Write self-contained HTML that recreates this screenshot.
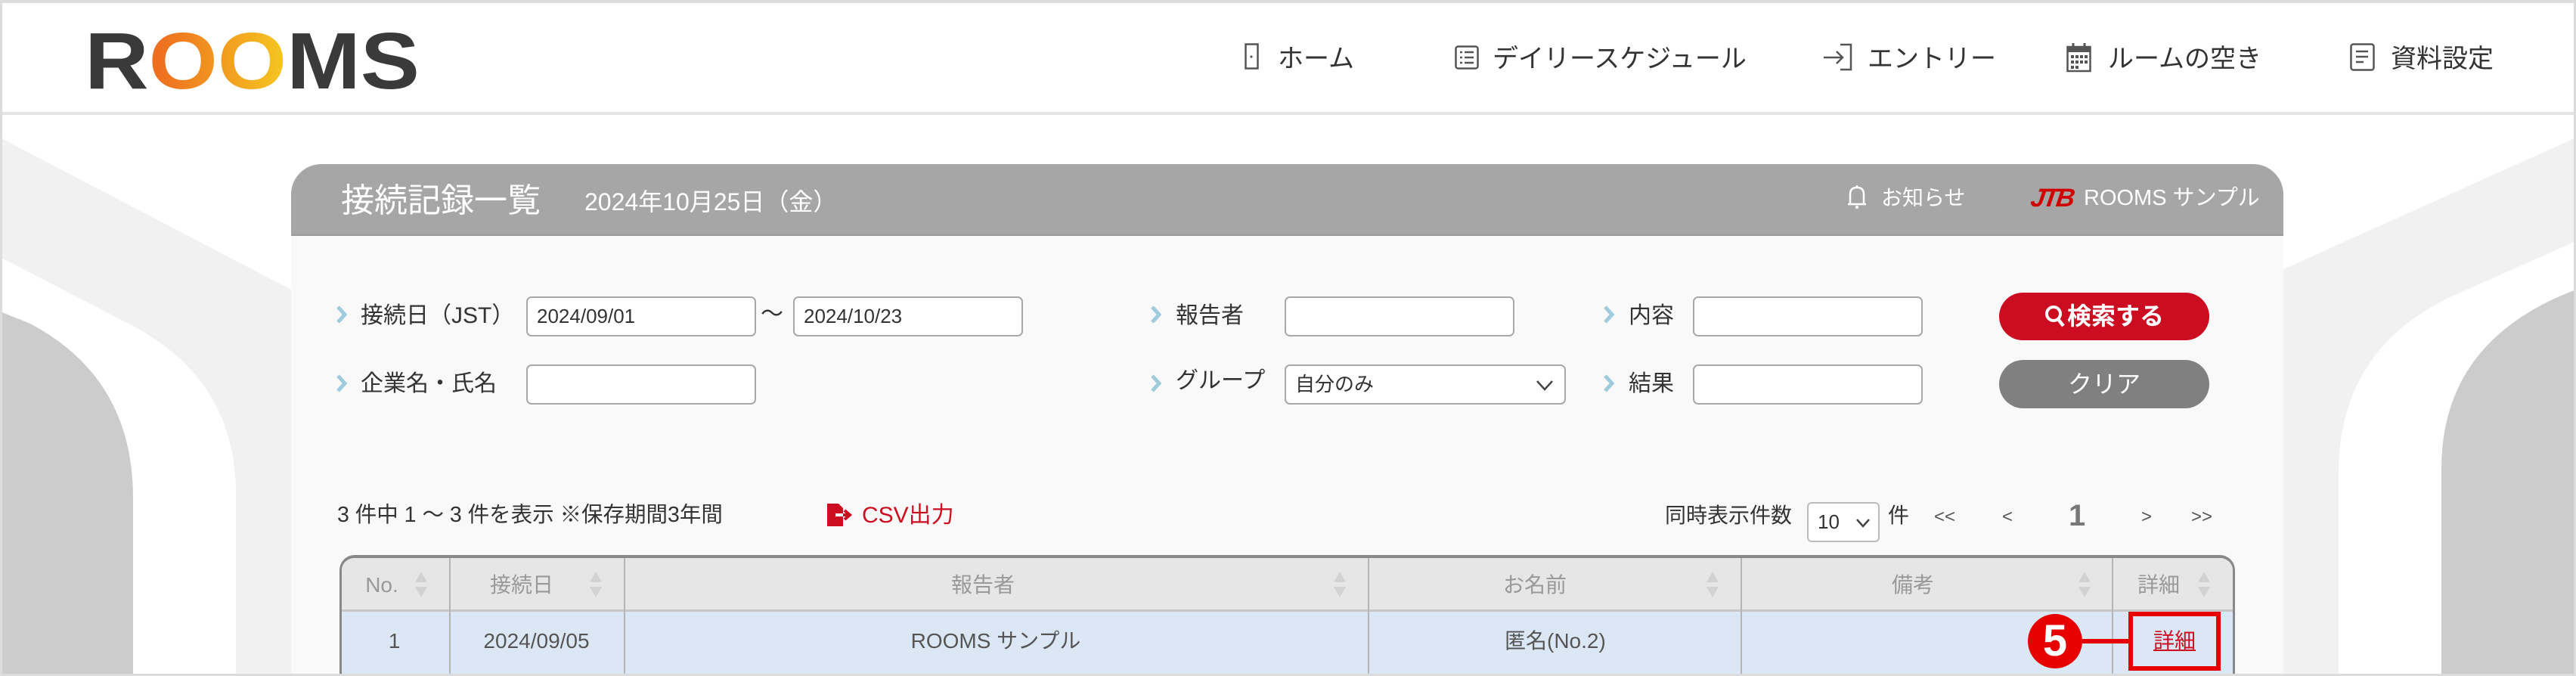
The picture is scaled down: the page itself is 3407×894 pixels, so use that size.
<!DOCTYPE html>
<html><head><meta charset="utf-8">
<style>
*{margin:0;padding:0;box-sizing:border-box}
html,body{width:3407px;height:894px;overflow:hidden;background:#fff}
body{position:relative;font-family:"Liberation Sans","Noto Sans CJK JP",sans-serif;color:#333}
.a{position:absolute;white-space:nowrap}
.nav{font-size:34px;color:#333;top:56px;line-height:44px}
.lbl{font-size:30px;line-height:40px;color:#333}
.inp{position:absolute;background:#fff;border:2px solid #a8a8a8;border-radius:7px;font-size:26px;line-height:49px;padding-left:12px;color:#333}
.th{position:absolute;top:738px;height:71px;line-height:71px;font-size:28px;color:#999;text-align:center}
.td{position:absolute;top:812px;height:82px;line-height:72px;font-size:28px;color:#555;text-align:center}
.vl{position:absolute;top:738px;width:2px;height:160px;background:#b5b5b5}
</style></head><body>
<svg class="a" style="left:0;top:0" width="3407" height="894">
<path d="M0,182 L385,383 L385,894 L0,894Z" fill="#f1f1f1"/>
<path d="M0,340 L170,428 Q312,500 312,654 L312,894 L0,894Z" fill="#fff"/>
<path d="M0,412 L40,428 Q176,500 176,659 L176,894 L0,894Z" fill="#cccccc"/>
<path d="M3020,356 L3407,182 L3407,894 L3020,894Z" fill="#f1f1f1"/>
<path d="M3407,319 L3247,390 Q3093,460 3093,626 L3093,894 L3407,894Z" fill="#fff"/>
<path d="M3407,383 Q3229,450 3229,620 L3229,894 L3407,894Z" fill="#cccccc"/>
</svg>
<div class="a" style="left:0;top:0;width:3407px;height:150px;background:#fff"></div>
<div class="a" style="left:0;top:148px;width:3407px;height:4px;background:#e4e4e4"></div>
<svg class="a" style="left:100px;top:30px" width="480" height="100">
<defs><linearGradient id="g" gradientUnits="userSpaceOnUse" x1="110" y1="0" x2="300" y2="0"><stop offset="0" stop-color="#ee6f1f"/><stop offset="1" stop-color="#f6d321"/></linearGradient></defs>
<text x="12" y="87" font-family="Liberation Sans" font-weight="bold" font-size="106" textLength="443" lengthAdjust="spacingAndGlyphs" fill="#3a3a3a">R<tspan fill="url(#g)">OO</tspan>MS</text>
</svg>
<svg class="a" style="left:1646px;top:57px" width="20" height="36"><rect x="1.5" y="1.5" width="16" height="32" fill="none" stroke="#555" stroke-width="2.5"/><circle cx="9" cy="18" r="1.6" fill="#555"/></svg>
<div class="a nav" style="left:1690px">ホーム</div>
<svg class="a" style="left:1924px;top:60px" width="32" height="32"><rect x="1.5" y="1.5" width="29" height="29" rx="3" fill="none" stroke="#555" stroke-width="2.5"/><g stroke="#555" stroke-width="2.5"><line x1="7" y1="9" x2="10" y2="9"/><line x1="13" y1="9" x2="25" y2="9"/><line x1="7" y1="16" x2="10" y2="16"/><line x1="13" y1="16" x2="25" y2="16"/><line x1="7" y1="23" x2="10" y2="23"/><line x1="13" y1="23" x2="25" y2="23"/></g></svg>
<div class="a nav" style="left:1974px">デイリースケジュール</div>
<svg class="a" style="left:2410px;top:57px" width="44" height="38"><path d="M24,2 H38 V35 H24" fill="none" stroke="#555" stroke-width="2.5"/><path d="M2,19 H27 M19,11 L27,19 L19,27" fill="none" stroke="#555" stroke-width="2.5"/></svg>
<div class="a nav" style="left:2470px">エントリー</div>
<svg class="a" style="left:2733px;top:56px" width="34" height="40"><rect x="1.5" y="6" width="30" height="32" fill="none" stroke="#555" stroke-width="2.5"/><rect x="1.5" y="6" width="30" height="7" fill="#555"/><line x1="9" y1="1" x2="9" y2="8" stroke="#555" stroke-width="3"/><line x1="24" y1="1" x2="24" y2="8" stroke="#555" stroke-width="3"/><g fill="#555"><rect x="6" y="17" width="4" height="4"/><rect x="12" y="17" width="4" height="4"/><rect x="18" y="17" width="4" height="4"/><rect x="24" y="17" width="4" height="4"/><rect x="6" y="24" width="4" height="4"/><rect x="12" y="24" width="4" height="4"/><rect x="18" y="24" width="4" height="4"/><rect x="24" y="24" width="4" height="4"/><rect x="6" y="31" width="4" height="4"/><rect x="12" y="31" width="4" height="4"/></g></svg>
<div class="a nav" style="left:2788px">ルームの空き</div>
<svg class="a" style="left:3108px;top:57px" width="34" height="38"><rect x="1.5" y="1.5" width="30" height="34" rx="3" fill="none" stroke="#555" stroke-width="2.5"/><g stroke="#555" stroke-width="2.5"><line x1="8" y1="11" x2="24" y2="11"/><line x1="8" y1="18" x2="24" y2="18"/><line x1="8" y1="25" x2="18" y2="25"/></g></svg>
<div class="a nav" style="left:3162px">資料設定</div>
<div class="a" style="left:385px;top:217px;width:2635px;height:700px;background:#f9f9f9;border-radius:40px 40px 0 0;overflow:hidden">
 <div style="height:95px;background:#a6a6a6;border-bottom:2px solid #999"></div>
</div>
<div class="a" style="left:451px;top:238px;font-size:44px;line-height:56px;color:#fff">接続記録一覧</div>
<div class="a" style="left:773px;top:246px;font-size:32px;line-height:42px;color:#fff">2024年10月25日（金）</div>
<svg class="a" style="left:2443px;top:244px" width="26" height="34"><path d="M4,26 V13 Q4,4 13,4 Q22,4 22,13 V26 Z M1,26 H25" fill="none" stroke="#fff" stroke-width="2.5"/><line x1="13" y1="1" x2="13" y2="4" stroke="#fff" stroke-width="2.5"/><circle cx="13" cy="30" r="2.2" fill="#fff"/></svg>
<div class="a" style="left:2488px;top:244px;font-size:28px;line-height:36px;color:#fff">お知らせ</div>
<div class="a" style="left:2686px;top:240px;font-size:34px;line-height:44px;color:#d00000;font-weight:bold;font-style:italic;letter-spacing:-3px;transform:skewX(-8deg)">JTB</div>
<div class="a" style="left:2756px;top:244px;font-size:29px;line-height:36px;color:#fff">ROOMS サンプル</div>
<svg class="a" style="left:444px;top:403px" width="16" height="26"><polyline points="3,3 12,13 3,23" fill="none" stroke="#9fcbdc" stroke-width="5"/></svg>
<div class="a lbl" style="left:477px;top:398px">接続日（JST）</div>
<div class="inp" style="left:696px;top:392px;width:304px;height:53px">2024/09/01</div>
<div class="a lbl" style="left:1006px;top:396px">～</div>
<div class="inp" style="left:1049px;top:392px;width:304px;height:53px">2024/10/23</div>
<svg class="a" style="left:1521px;top:403px" width="16" height="26"><polyline points="3,3 12,13 3,23" fill="none" stroke="#9fcbdc" stroke-width="5"/></svg>
<div class="a lbl" style="left:1555px;top:398px">報告者</div>
<div class="inp" style="left:1699px;top:392px;width:304px;height:53px"></div>
<svg class="a" style="left:2120px;top:403px" width="16" height="26"><polyline points="3,3 12,13 3,23" fill="none" stroke="#9fcbdc" stroke-width="5"/></svg>
<div class="a lbl" style="left:2154px;top:398px">内容</div>
<div class="inp" style="left:2239px;top:392px;width:304px;height:53px"></div>
<div class="a" style="left:2644px;top:387px;width:278px;height:63px;border-radius:32px;background:#cc0c20;color:#fff;font-size:32px;line-height:63px;text-align:center;font-weight:bold"><svg width="28" height="30" style="vertical-align:-4px;margin-right:2px"><circle cx="12" cy="12" r="9" fill="none" stroke="#fff" stroke-width="4"/><line x1="18" y1="19" x2="25" y2="28" stroke="#fff" stroke-width="4.5"/></svg>検索する</div>
<svg class="a" style="left:444px;top:494px" width="16" height="26"><polyline points="3,3 12,13 3,23" fill="none" stroke="#9fcbdc" stroke-width="5"/></svg>
<div class="a lbl" style="left:477px;top:488px">企業名・氏名</div>
<div class="inp" style="left:696px;top:482px;width:304px;height:53px"></div>
<svg class="a" style="left:1521px;top:494px" width="16" height="26"><polyline points="3,3 12,13 3,23" fill="none" stroke="#9fcbdc" stroke-width="5"/></svg>
<div class="a lbl" style="left:1555px;top:484px">グループ</div>
<div class="inp" style="left:1699px;top:482px;width:372px;height:53px">自分のみ<svg width="24" height="16" style="position:absolute;right:14px;top:18px"><polyline points="2,2 12,13 22,2" fill="none" stroke="#444" stroke-width="2.5"/></svg></div>
<svg class="a" style="left:2120px;top:494px" width="16" height="26"><polyline points="3,3 12,13 3,23" fill="none" stroke="#9fcbdc" stroke-width="5"/></svg>
<div class="a lbl" style="left:2154px;top:488px">結果</div>
<div class="inp" style="left:2239px;top:482px;width:304px;height:53px"></div>
<div class="a" style="left:2644px;top:476px;width:278px;height:64px;border-radius:32px;background:#808080;color:#fff;font-size:32px;line-height:64px;text-align:center">クリア</div>
<div class="a" style="left:446px;top:662px;font-size:28.5px;line-height:38px;color:#333">3 件中 1 ～ 3 件を表示 ※保存期間3年間</div>
<svg class="a" style="left:1093px;top:665px" width="40" height="32"><path d="M1,1 H16 L22,7 V31 H1 Z" fill="#cc0c20"/><path d="M12,16 H30 M24,10 L31,16 L24,22" fill="none" stroke="#cc0c20" stroke-width="4"/><path d="M12,16 H22" stroke="#fff" stroke-width="4"/></svg>
<div class="a" style="left:1140px;top:663px;font-size:30px;line-height:38px;color:#cc0c20">CSV出力</div>
<div class="a" style="left:2202px;top:664px;font-size:28px;line-height:36px">同時表示件数</div>
<div class="a" style="left:2390px;top:664px;width:96px;height:53px;border:2px solid #bbb;border-radius:6px;background:#fff;font-size:26px;line-height:49px;padding-left:12px">10<svg width="20" height="14" style="position:absolute;right:10px;top:19px"><polyline points="2,2 10,11 18,2" fill="none" stroke="#444" stroke-width="2.5"/></svg></div>
<div class="a" style="left:2497px;top:664px;font-size:28px;line-height:36px">件</div>
<div class="a" style="left:2558px;top:666px;font-size:24px;line-height:36px;color:#555">&lt;&lt;</div>
<div class="a" style="left:2648px;top:666px;font-size:24px;line-height:36px;color:#555">&lt;</div>
<div class="a" style="left:2736px;top:658px;font-size:40px;line-height:48px;color:#777;font-weight:bold">1</div>
<div class="a" style="left:2832px;top:666px;font-size:24px;line-height:36px;color:#555">&gt;</div>
<div class="a" style="left:2898px;top:666px;font-size:24px;line-height:36px;color:#555">&gt;&gt;</div>
<div class="a" style="left:449px;top:734px;width:2507px;height:170px;border:3px solid #888;border-top-width:4px;border-radius:20px 20px 0 0;background:#dce7f5;overflow:hidden">
 <div style="height:71px;background:#e6e6e6;border-bottom:3px solid #c8c8c8"></div>
</div>
<div class="vl" style="left:594px"></div>
<div class="vl" style="left:825px"></div>
<div class="vl" style="left:1809px"></div>
<div class="vl" style="left:2302px"></div>
<div class="vl" style="left:2793px"></div>
<div class="th" style="left:470px;width:70px">No.</div>
<div class="th" style="left:620px;width:140px">接続日</div>
<div class="th" style="left:1200px;width:200px">報告者</div>
<div class="th" style="left:1960px;width:140px">お名前</div>
<div class="th" style="left:2470px;width:120px">備考</div>
<div class="th" style="left:2820px;width:70px">詳細</div>
<svg class="a" style="left:0;top:0" width="3407" height="894"><g fill="#d2d2d2">
<path d="M549,770 l8,-14 l8,14z M549,776 l8,14 l8,-14z"/>
<path d="M780,770 l8,-14 l8,14z M780,776 l8,14 l8,-14z"/>
<path d="M1764,770 l8,-14 l8,14z M1764,776 l8,14 l8,-14z"/>
<path d="M2257,770 l8,-14 l8,14z M2257,776 l8,14 l8,-14z"/>
<path d="M2749,770 l8,-14 l8,14z M2749,776 l8,14 l8,-14z"/>
<path d="M2907,770 l8,-14 l8,14z M2907,776 l8,14 l8,-14z"/>
</g></svg>
<div class="td" style="left:449px;width:145px">1</div>
<div class="td" style="left:594px;width:231px">2024/09/05</div>
<div class="td" style="left:825px;width:984px">ROOMS サンプル</div>
<div class="td" style="left:1990px;text-align:left">匿名(No.2)</div>
<div class="td" style="left:2815px;width:122px;color:#cc0c20;text-decoration:underline">詳細</div>
<div class="a" style="left:2750px;top:845px;width:66px;height:6px;background:#e60000"></div>
<div class="a" style="left:2815px;top:809px;width:122px;height:78px;border:6px solid #e60000"></div>
<div class="a" style="left:2682px;top:812px;width:72px;height:72px;border-radius:50%;background:#e60000;color:#fff;font-weight:bold;font-size:58px;line-height:72px;text-align:center">5</div>
<div class="a" style="left:0;top:0;width:3407px;height:894px;border:3px solid #dcdcdc;border-top-width:4px"></div>
</body></html>
